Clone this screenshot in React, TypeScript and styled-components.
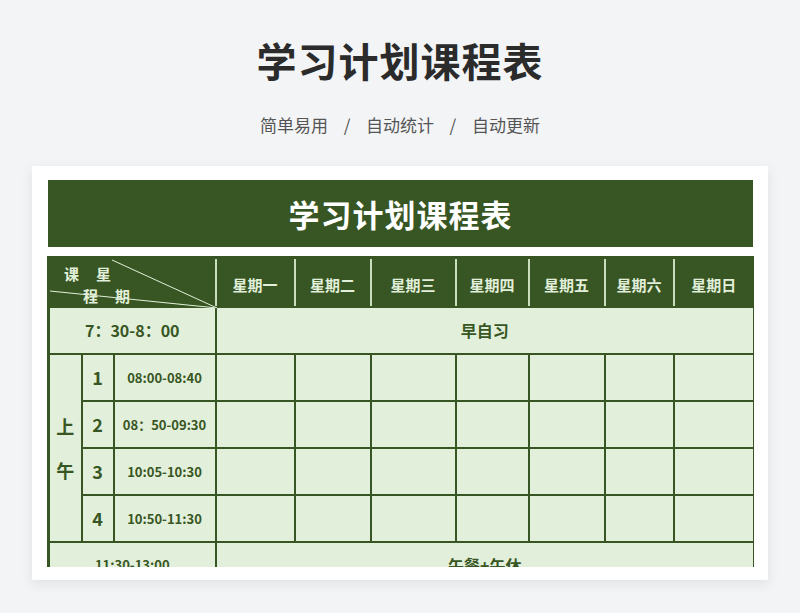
import React from "react";
import styled, { createGlobalStyle } from "styled-components";

const Global = createGlobalStyle`
  html, body { margin: 0; background: #f3f4f6; }
  body { font-family: "Noto Sans CJK SC", "Noto Sans", sans-serif; }
`;

const days = ["星期一", "星期二", "星期三", "星期四", "星期五", "星期六", "星期日"];
const dayWidths = [79, 76, 85, 73, 76, 69, 81];
const lessons = [
  { n: "1", t: "08:00-08:40" },
  { n: "2", t: "08：50-09:30" },
  { n: "3", t: "10:05-10:30" },
  { n: "4", t: "10:50-11:30" },
];

const App = () => (
  <Page>
    <Global />
    <Title>学习计划课程表</Title>
    <Sub>简单易用 &nbsp;/&nbsp; 自动统计 &nbsp;/&nbsp; 自动更新</Sub>
    <Card>
      <Clip>
        <Banner>学习计划课程表</Banner>
        <Table>
          <colgroup>
            <col style={{ width: 33 }} />
            <col style={{ width: 32 }} />
            <col style={{ width: 102 }} />
            {dayWidths.map((w, i) => (
              <col key={i} style={{ width: w }} />
            ))}
          </colgroup>
          <tbody>
            <tr style={{ height: 49 }}>
              <Head colSpan={3} $diag>
                <svg width="167" height="49" viewBox="0 0 167 49">
                  <line x1="62" y1="1" x2="167" y2="49" stroke="#e2efda" strokeWidth="1" />
                  <line x1="0" y1="32" x2="167" y2="49" stroke="#e2efda" strokeWidth="1" />
                </svg>
                <DiagText style={{ top: 4, left: 14 }}>课&nbsp;&nbsp;&nbsp;&nbsp;&nbsp;星</DiagText>
                <DiagText style={{ top: 26, left: 33 }}>程&nbsp;&nbsp;&nbsp;&nbsp;&nbsp;期</DiagText>
              </Head>
              {days.map((d) => (
                <Head key={d}>{d}</Head>
              ))}
            </tr>
            <tr style={{ height: 47 }}>
              <Cell colSpan={3}>7：30-8：00</Cell>
              <Cell colSpan={7}>早自习</Cell>
            </tr>
            {lessons.map((l, i) => (
              <tr key={l.n} style={{ height: 47 }}>
                {i === 0 && (
                  <Cell rowSpan={4} $big>
                    <Vert>上<br />午</Vert>
                  </Cell>
                )}
                <Cell $big>{l.n}</Cell>
                <Cell $small>{l.t}</Cell>
                {days.map((d) => (
                  <Cell key={d} />
                ))}
              </tr>
            ))}
            <tr style={{ height: 47 }}>
              <Cell colSpan={3} $small>11:30-13:00</Cell>
              <Cell colSpan={7}>午餐+午休</Cell>
            </tr>
          </tbody>
        </Table>
      </Clip>
    </Card>
  </Page>
);

export default App;

const Page = styled.div`
  width: 800px;
  height: 613px;
  overflow: hidden;
  display: flex;
  flex-direction: column;
  align-items: center;
`;

const Title = styled.h1`
  margin: 33px 0 0;
  font-size: 40px;
  line-height: 54px;
  font-weight: 700;
  color: #2b2b2b;
  letter-spacing: 1px;
`;

const Sub = styled.div`
  margin-top: 26px;
  font-size: 17px;
  line-height: 24px;
  color: #555;
  word-spacing: 4px;
`;

const Card = styled.div`
  margin-top: 29px;
  width: 736px;
  box-sizing: border-box;
  background: #fff;
  padding: 12px 14px 13px 15px;
  box-shadow: 0 4px 12px rgba(0, 0, 0, 0.08);
`;

const Clip = styled.div`
  height: 389px;
  overflow: hidden;
`;

const Banner = styled.div`
  margin: 2px 1px 0;
  height: 67px;
  background: #375623;
  color: #fff;
  font-size: 31px;
  font-weight: 700;
  display: flex;
  align-items: center;
  justify-content: center;
  letter-spacing: 1px;
`;

const Table = styled.table`
  margin-top: 9px;
  width: 707px;
  table-layout: fixed;
  border-collapse: collapse;
  border: 3px solid #375623;
`;

const Head = styled.td<{ $diag?: boolean }>`
  position: relative;
  background: #375623;
  color: #e2efda;
  font-size: 15px;
  font-weight: 700;
  text-align: center;
  border-top: 2px solid #375623;
  border-bottom: 2px solid #375623;
  border-left: ${(p) => (p.$diag ? "3px solid #375623" : "2px solid #c9dcbc")};
  border-right: 2px solid #c9dcbc;
  padding: 4px 0 0;
  &:last-child {
    border-right: 3px solid #375623;
  }
  svg {
    position: absolute;
    left: 0;
    top: 0;
  }
`;

const DiagText = styled.span`
  position: absolute;
  font-size: 15px;
  font-weight: 700;
  color: #e2efda;
`;

const Cell = styled.td<{ $big?: boolean; $small?: boolean }>`
  background: #e2efda;
  border: 2px solid #375623;
  color: #375623;
  text-align: center;
  padding: 0;
  font-weight: 700;
  font-size: ${(p) => (p.$big ? "18px" : p.$small ? "13px" : "16px")};
`;

const Vert = styled.span`
  line-height: 44px;
`;
